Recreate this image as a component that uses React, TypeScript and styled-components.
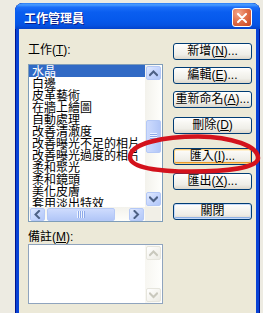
import React from "react";
import styled, { createGlobalStyle, css } from "styled-components";

const GlobalStyle = createGlobalStyle`
  html, body { margin: 0; padding: 0; }
  body {
    width: 263px;
    height: 313px;
    overflow: hidden;
    background: #EDEBE2;
    font-family: "Liberation Sans", "Noto Sans CJK TC", sans-serif;
    font-size: 12px;
    color: #000;
  }
  #root { width: 263px; height: 313px; }
`;

const Stage = styled.div`
  position: relative;
  width: 263px;
  height: 313px;
  overflow: hidden;
  box-sizing: border-box;
  padding: 3px 0 0 15px;
`;

const Window = styled.div`
  width: 245px;
  height: 340px;
  display: flex;
  flex-direction: column;
  border-radius: 8px 8px 0 0;
  overflow: hidden;
  background: #0842D5;
  box-shadow: inset 1px 0 #00138C, inset -1px 0 #00138C;
`;

const TitleBar = styled.div`
  flex: none;
  height: 26px;
  box-sizing: border-box;
  padding: 3px 8px 0 9px;
  display: flex;
  align-items: center;
  justify-content: space-between;
  background: linear-gradient(
    to bottom,
    #2A7CF6 0%,
    #4B9DFF 7%,
    #1C6EF8 16%,
    #0A5EF0 35%,
    #0659EC 65%,
    #0553E2 85%,
    #0343CC 100%
  );
`;

const Title = styled.span`
  color: #fff;
  font-family: "Noto Sans CJK TC", sans-serif;
  font-weight: bold;
  font-size: 12px;
  line-height: 14px;
  text-shadow: 1px 1px 0 #0A1E8C;
`;

const CloseButton = styled.div`
  width: 20px;
  height: 19px;
  box-sizing: border-box;
  border: 1px solid #fff;
  border-radius: 3px;
  background: radial-gradient(circle at 30% 25%, #F4A78C 0%, #E2714C 45%, #C9441E 100%);
  display: flex;
  align-items: center;
  justify-content: center;
`;

const Body = styled.div`
  flex: 1;
  margin: 0 4px;
  background: #ECE9D8;
  display: grid;
  grid-template-columns: 135px 79px;
  column-gap: 10px;
  align-items: start;
  padding: 14px 4px 0 9px;
`;

const Column = styled.div`
  display: flex;
  flex-direction: column;
`;

const Label = styled.div<{ $gap?: number }>`
  height: 14px;
  line-height: 14px;
  font-size: 12px;
  white-space: nowrap;
  margin-top: ${(p) => p.$gap ?? 0}px;
`;

const ListBox = styled.div`
  margin-top: 7px;
  height: 158px;
  box-sizing: border-box;
  border: 1px solid #7F9DB9;
  background: #fff;
  display: grid;
  grid-template-columns: 116px 16px;
  grid-template-rows: 142px 14px;
  overflow: hidden;
`;

const Items = styled.div`
  overflow: hidden;
  min-height: 0;
  display: flex;
  flex-direction: column;
`;

const Item = styled.div<{ $selected?: boolean }>`
  flex: none;
  height: 12px;
  line-height: 12px;
  padding-left: 3px;
  white-space: nowrap;
  font-family: "Noto Sans CJK TC", sans-serif;
  font-size: 12px;
  ${(p) =>
    p.$selected &&
    css`
      background: #316AC5;
      color: #fff;
    `}
`;

const VScroll = styled.div<{ $disabled?: boolean }>`
  display: flex;
  flex-direction: column;
  padding: 1px 0 1px 1px;
  min-height: 0;
  background: ${(p) =>
    p.$disabled
      ? "linear-gradient(to right, #F7F6F1, #FEFEFC)"
      : "linear-gradient(to right, #F3F2EC, #FEFEFB)"};
`;

const HScroll = styled.div`
  display: flex;
  align-items: center;
  padding: 0 1px;
  background: linear-gradient(to bottom, #F3F2EC, #FEFEFB);
`;

const Corner = styled.div`
  background: #F1EFE7;
`;

const ArrowButton = styled.div<{ $disabled?: boolean; $w: number; $h: number }>`
  flex: none;
  width: ${(p) => p.$w}px;
  height: ${(p) => p.$h}px;
  box-sizing: border-box;
  border: 1px solid ${(p) => (p.$disabled ? "#E6E5DD" : "#B4C8F6")};
  border-radius: 2px;
  background: ${(p) =>
    p.$disabled
      ? "linear-gradient(135deg, #FFFFFF 0%, #F4F3EE 60%, #ECEBE4 100%)"
      : "linear-gradient(135deg, #E1EAFE 0%, #C6D6FD 50%, #B2C7F8 100%)"};
  display: flex;
  align-items: center;
  justify-content: center;
`;

const Spacer = styled.div`
  flex: 1;
`;

const VThumb = styled.div<{ $offset: number }>`
  flex: none;
  margin-top: ${(p) => p.$offset}px;
  width: 15px;
  height: 33px;
  box-sizing: border-box;
  border: 1px solid #B4C8F6;
  border-radius: 2px;
  background: linear-gradient(to right, #CEDBFD, #BDCFFA 60%, #B2C6F7);
  display: flex;
  align-items: center;
  justify-content: center;
`;

const HThumb = styled.div<{ $offset: number }>`
  flex: none;
  margin-left: ${(p) => p.$offset}px;
  width: 68px;
  height: 13px;
  box-sizing: border-box;
  border: 1px solid #B4C8F6;
  border-radius: 2px;
  background: linear-gradient(to bottom, #CEDBFD, #BDCFFA 60%, #B2C6F7);
  display: flex;
  align-items: center;
  justify-content: center;
`;

const GripH = styled.div`
  width: 7px;
  height: 8px;
  background: repeating-linear-gradient(to bottom, #EEF3FE 0 1px, #8DA9EA 1px 2px);
`;

const GripV = styled.div`
  width: 8px;
  height: 7px;
  background: repeating-linear-gradient(to right, #EEF3FE 0 1px, #8DA9EA 1px 2px);
`;

const NotesBox = styled.div`
  height: 60px;
  box-sizing: border-box;
  border: 1px solid #8FA4BE;
  background: #fff;
  display: grid;
  grid-template-columns: 116px 16px;
`;

const Button = styled.div<{ $top: number; $variant?: "hot" | "default" }>`
  margin-top: ${(p) => p.$top}px;
  height: 17px;
  box-sizing: border-box;
  border: 1px solid #003C74;
  border-radius: 3px;
  background: linear-gradient(to bottom, #FFFFFF 0%, #F8F7F3 30%, #EFEEE8 70%, #DCD7CC 100%);
  display: flex;
  align-items: center;
  justify-content: center;
  font-size: 12px;
  line-height: 15px;
  white-space: nowrap;
  overflow: visible;
  ${(p) =>
    p.$variant === "hot" &&
    css`
      box-shadow: inset 0 0 0 1px #FBCF7E, inset 0 -2px 0 0 #E99B2E, inset 0 2px 0 0 #FFF0CF;
    `}
  ${(p) =>
    p.$variant === "default" &&
    css`
      box-shadow: inset 0 0 0 1px #C6DAF8, inset 0 -2px 0 0 #8FB1E6;
    `}
`;

const Annotation = styled.svg`
  position: absolute;
  left: 0;
  top: 0;
  width: 263px;
  height: 313px;
  pointer-events: none;
`;

type Dir = "up" | "down" | "left" | "right";

const Chevron = ({ dir, color }: { dir: Dir; color: string }) => {
  const pts: Record<Dir, string> = {
    up: "1,5 4.5,1.5 8,5",
    down: "1,1.5 4.5,5 8,1.5",
    left: "5,1 1.5,4.5 5,8",
    right: "1.5,1 5,4.5 1.5,8",
  };
  const vertical = dir === "up" || dir === "down";
  return (
    <svg width={vertical ? 9 : 7} height={vertical ? 7 : 9} viewBox={vertical ? "0 0 9 7" : "0 0 7 9"}>
      <polyline points={pts[dir]} fill="none" stroke={color} strokeWidth="2" strokeLinecap="square" />
    </svg>
  );
};

const items = [
  "水晶",
  "白邊",
  "皮革藝術",
  "在牆上繪圖",
  "自動處理",
  "改善清澈度",
  "改善曝光不足的相片",
  "改善曝光過度的相片",
  "柔和聚光",
  "柔和鏡頭",
  "美化皮膚",
  "套用淡出特效",
];

const ACTIVE = "#4D6185";
const DISABLED = "#C9C8BD";

export default function App() {
  return (
    <>
      <GlobalStyle />
      <Stage>
        <Window>
          <TitleBar>
            <Title>工作管理員</Title>
            <CloseButton>
              <svg width="10" height="10" viewBox="0 0 10 10">
                <path d="M1 1 L9 9 M9 1 L1 9" stroke="#fff" strokeWidth="2" strokeLinecap="round" />
              </svg>
            </CloseButton>
          </TitleBar>
          <Body>
            <Column>
              <Label>
                工作(<u>T</u>):
              </Label>
              <ListBox>
                <Items>
                  {items.map((t, i) => (
                    <Item key={t} $selected={i === 0}>
                      {t}
                    </Item>
                  ))}
                </Items>
                <VScroll>
                  <ArrowButton $w={15} $h={14}>
                    <Chevron dir="up" color={ACTIVE} />
                  </ArrowButton>
                  <VThumb $offset={40}>
                    <GripH />
                  </VThumb>
                  <Spacer />
                  <ArrowButton $w={15} $h={14}>
                    <Chevron dir="down" color={ACTIVE} />
                  </ArrowButton>
                </VScroll>
                <HScroll>
                  <ArrowButton $w={15} $h={13}>
                    <Chevron dir="left" color={ACTIVE} />
                  </ArrowButton>
                  <HThumb $offset={2}>
                    <GripV />
                  </HThumb>
                  <Spacer />
                  <ArrowButton $w={15} $h={13}>
                    <Chevron dir="right" color={ACTIVE} />
                  </ArrowButton>
                </HScroll>
                <Corner />
              </ListBox>
              <Label $gap={8}>
                備註(<u>M</u>):
              </Label>
              <NotesBox>
                <div />
                <VScroll $disabled>
                  <ArrowButton $w={15} $h={14} $disabled>
                    <Chevron dir="up" color={DISABLED} />
                  </ArrowButton>
                  <Spacer />
                  <ArrowButton $w={15} $h={14} $disabled>
                    <Chevron dir="down" color={DISABLED} />
                  </ArrowButton>
                </VScroll>
              </NotesBox>
            </Column>
            <Column>
              <Button $top={0}>
                新增(<u>N</u>)...
              </Button>
              <Button $top={7}>
                編輯(<u>E</u>)...
              </Button>
              <Button $top={7}>
                重新命名(<u>A</u>)...
              </Button>
              <Button $top={9}>
                刪除(<u>D</u>)
              </Button>
              <Button $top={14} $variant="hot">
                匯入(<u>I</u>)...
              </Button>
              <Button $top={8}>
                匯出(<u>X</u>)...
              </Button>
              <Button $top={13} $variant="default">
                關閉
              </Button>
            </Column>
          </Body>
        </Window>
        <Annotation viewBox="0 0 263 313">
          <path
            d="M130 157 C130 143, 165 136.5, 198 136.5 C232 137, 258 146, 258 158 C258 168, 226 171.5, 192 171.5 C158 171.5, 130 168, 130 157 Z"
            fill="none"
            stroke="#D3121C"
            strokeWidth="4.5"
          />
        </Annotation>
      </Stage>
    </>
  );
}
